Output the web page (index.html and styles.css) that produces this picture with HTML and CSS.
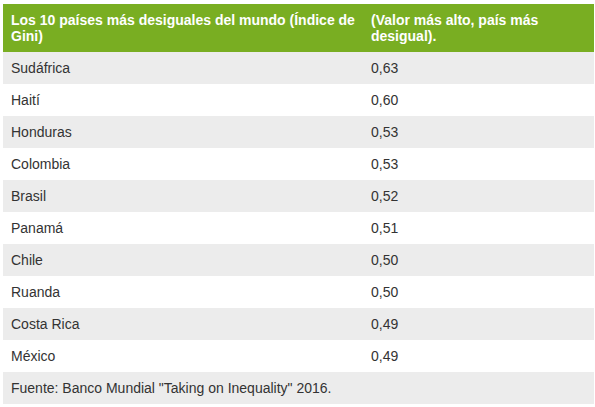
FILE: index.html
```html
<!DOCTYPE html>
<html lang="es">
<head>
<meta charset="utf-8">
<link rel="stylesheet" href="styles.css">
</head>
<body>
<table class="gini">
  <thead>
    <tr>
      <th class="col-country">Los 10 países más desiguales del mundo (Índice de Gini)</th>
      <th class="col-value">(Valor más alto, país más desigual).</th>
    </tr>
  </thead>
  <tbody>
    <tr><td>Sudáfrica</td><td>0,63</td></tr>
    <tr><td>Haití</td><td>0,60</td></tr>
    <tr><td>Honduras</td><td>0,53</td></tr>
    <tr><td>Colombia</td><td>0,53</td></tr>
    <tr><td>Brasil</td><td>0,52</td></tr>
    <tr><td>Panamá</td><td>0,51</td></tr>
    <tr><td>Chile</td><td>0,50</td></tr>
    <tr><td>Ruanda</td><td>0,50</td></tr>
    <tr><td>Costa Rica</td><td>0,49</td></tr>
    <tr><td>México</td><td>0,49</td></tr>
    <tr><td colspan="2">Fuente: Banco Mundial "Taking on Inequality" 2016.</td></tr>
  </tbody>
</table>
</body>
</html>
```

FILE: styles.css
```css
html, body {
  margin: 0;
  padding: 0;
  background: #ffffff;
}
body {
  padding: 4px 1px 0 3px;
  font-family: "Liberation Sans", Arial, Helvetica, sans-serif;
  font-size: 14px;
  color: #333333;
}
.gini {
  width: 591px;
  border-collapse: collapse;
  border-spacing: 0;
}
.gini th,
.gini td {
  padding: 8px 8px;
  line-height: 16px;
  text-align: left;
  vertical-align: top;
}
.gini th {
  background: #79ae22;
  color: #ffffff;
  font-weight: bold;
}
.col-country {
  width: 344px;
}
.gini tbody tr:nth-child(odd) td {
  background: #ececec;
}
.gini tbody tr:nth-child(even) td {
  background: #ffffff;
}
```
